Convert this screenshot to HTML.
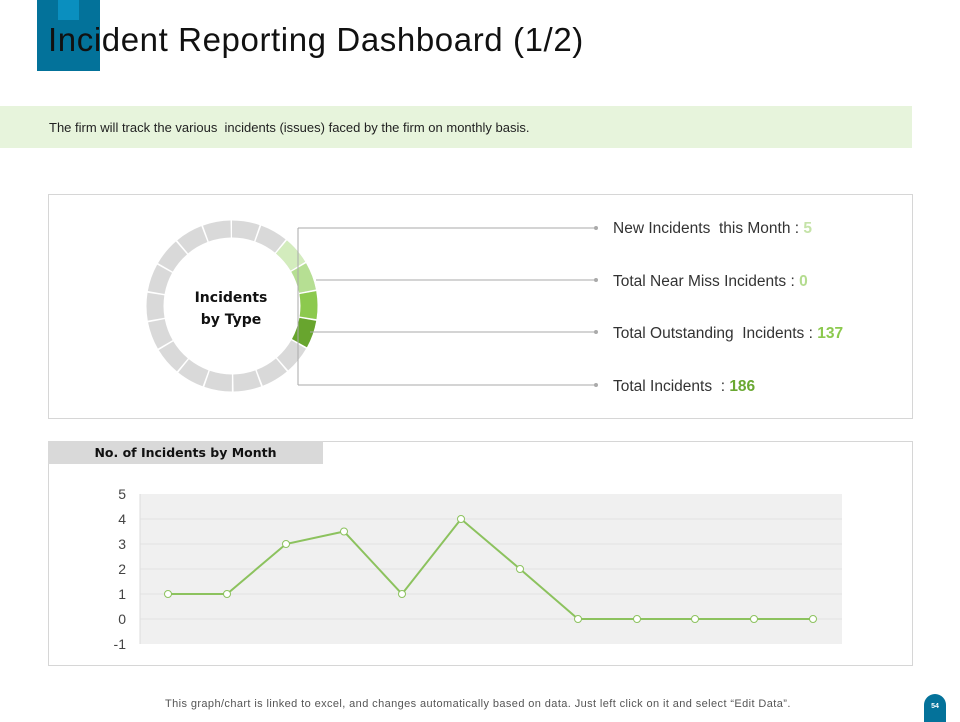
<!DOCTYPE html>
<html><head><meta charset="utf-8"><style>
body{margin:0;width:960px;height:720px;position:relative;background:#fff;font-family:"Liberation Sans",sans-serif;overflow:hidden}
.abs{position:absolute}
</style></head><body>
<div class="abs" style="left:37px;top:0;width:63px;height:71px;background:#03729a"></div>
<div class="abs" style="left:58px;top:0;width:21px;height:20px;background:#0a8fbf"></div>
<div class="abs" style="left:48px;top:21px;font-size:33px;color:#111;font-family:'Liberation Sans',sans-serif;letter-spacing:0.6px;">Incident Reporting Dashboard (1/2)</div>
<div class="abs" style="left:0;top:106px;width:912px;height:42px;background:#e7f4dc"></div>
<div class="abs" style="left:49px;top:120px;font-size:13px;color:#222">The firm will track the various &nbsp;incidents (issues) faced by the firm on monthly basis.</div>
<div class="abs" style="left:48px;top:194px;width:863px;height:223px;border:1px solid #d6d6d6"></div>
<div class="abs" style="left:48px;top:441px;width:863px;height:223px;border:1px solid #d6d6d6"></div>
<div class="abs" style="left:48px;top:441px;width:275px;height:23px;background:#d9d9d9"></div>
<div class="abs" style="left:48px;top:445px;width:275px;text-align:center;font-size:12.5px;font-weight:bold;color:#111;font-family:'DejaVu Sans',sans-serif">No. of Incidents by Month</div>
<svg class="abs" style="left:0;top:0" width="960" height="720">
<circle cx="232" cy="306" r="77" fill="none" stroke="#d9d9d9" stroke-width="17" stroke-dasharray="25.3 1.58" transform="rotate(-90 232 306)"/>
<g fill="none" stroke-width="17" stroke-dasharray="25.3 460">
<circle cx="232" cy="306" r="77" stroke="#d3ecbd" transform="rotate(-50 232 306)"/>
<circle cx="232" cy="306" r="77" stroke="#b6df93" transform="rotate(-30 232 306)"/>
<circle cx="232" cy="306" r="77" stroke="#8cc94e" transform="rotate(-10 232 306)"/>
<circle cx="232" cy="306" r="77" stroke="#68a52e" transform="rotate(10 232 306)"/>
</g>
<g stroke="#aaa" stroke-width="1" fill="none">
<path d="M298 228V385M298 228H596M316 280H596M310 332H596M298 385H596"/>
</g>
<g fill="#aaa"><circle cx="596" cy="228" r="2"/><circle cx="596" cy="280" r="2"/><circle cx="596" cy="332" r="2"/><circle cx="596" cy="385" r="2"/></g>
<text x="231" y="302" text-anchor="middle" font-family="DejaVu Sans,sans-serif" font-weight="bold" font-size="14" fill="#111">Incidents</text>
<text x="231" y="324" text-anchor="middle" font-family="DejaVu Sans,sans-serif" font-weight="bold" font-size="14" fill="#111">by Type</text>
<g font-size="15.5" fill="#333" font-family="Liberation Sans,sans-serif">
<text x="613" y="233">New Incidents &#160;this Month : <tspan fill="#c5e3a8" font-weight="bold">5</tspan></text>
<text x="613" y="286">Total Near Miss Incidents : <tspan fill="#b4dc8f" font-weight="bold">0</tspan></text>
<text x="613" y="338">Total Outstanding &#160;Incidents : <tspan fill="#8cc94e" font-weight="bold">137</tspan></text>
<text x="613" y="391">Total Incidents &#160;: <tspan fill="#6aa832" font-weight="bold">186</tspan></text>
</g>
<rect x="140" y="494" width="702" height="150" fill="#f0f0f0"/>
<g stroke="#e2e2e2" stroke-width="1"><path d="M140 519H842M140 544H842M140 569H842M140 594H842M140 619H842"/></g>
<line x1="140" y1="494" x2="140" y2="644" stroke="#ddd"/>
<g font-size="14" fill="#444" text-anchor="end">
<text x="126" y="499">5</text><text x="126" y="524">4</text><text x="126" y="549">3</text><text x="126" y="574">2</text><text x="126" y="599">1</text><text x="126" y="624">0</text><text x="126" y="649">-1</text>
</g>
<polyline fill="none" stroke="#8cc25e" stroke-width="2" points="168,594 227,594 286,544 344,531.5 402,594 461,519 520,569 578,619 637,619 695,619 754,619 813,619"/>
<g fill="#fff" stroke="#8cc25e" stroke-width="1">
<circle cx="168" cy="594" r="3.5"/><circle cx="227" cy="594" r="3.5"/><circle cx="286" cy="544" r="3.5"/><circle cx="344" cy="531.5" r="3.5"/><circle cx="402" cy="594" r="3.5"/><circle cx="461" cy="519" r="3.5"/><circle cx="520" cy="569" r="3.5"/><circle cx="578" cy="619" r="3.5"/><circle cx="637" cy="619" r="3.5"/><circle cx="695" cy="619" r="3.5"/><circle cx="754" cy="619" r="3.5"/><circle cx="813" cy="619" r="3.5"/>
</g>
</svg>
<div class="abs" style="left:165px;top:698px;font-size:11px;letter-spacing:0.4px;color:#555;white-space:nowrap">This graph/chart is linked to excel, and changes automatically based on data. Just left click on it and select “Edit Data”.</div>
<div class="abs" style="left:924px;top:694px;width:22px;height:28px;background:#04729a;border-radius:11px 11px 0 0;color:#fff;font-size:7px;font-weight:bold;text-align:center;line-height:26px">54</div>
</body></html>
